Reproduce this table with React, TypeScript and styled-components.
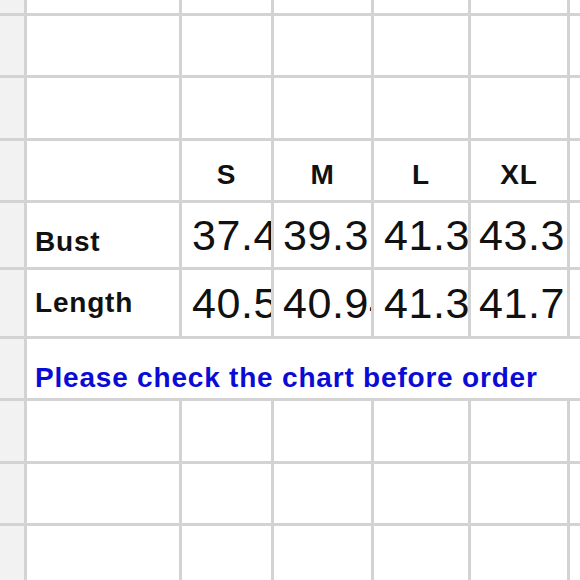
import { Fragment } from "react";
import styled, { createGlobalStyle } from "styled-components";

const GlobalStyle = createGlobalStyle`
	html, body {
		margin: 0;
		padding: 0;
		background: #ffffff;
	}
	body {
		font-family: "Liberation Sans", Arial, sans-serif;
	}
`;

// the sheet: grid lines are the 3px gaps showing the grey background
const Sheet = styled.div`
	display: grid;
	grid-template-columns: 24px 152px 89px 97px 94px 96px 1fr;
	grid-template-rows: 13px 59px 60px 59px 64px 66px 59px 60px 59px 1fr;
	gap: 3px;
	width: 580px;
	height: 580px;
	background: #d3d3d3;
	overflow: hidden;
`;

const Gutter = styled.div`
	background: #f2f2f2;
`;

const Cell = styled.div`
	background: #ffffff;
	overflow: hidden;
	white-space: nowrap;
`;

const HeaderCell = styled(Cell)`
	text-align: center;
	padding-top: 20px;
	font-size: 28px;
	line-height: 28px;
	font-weight: bold;
	letter-spacing: 0.8px;
	color: #111;
`;

const LabelCell = styled(Cell)<{ $top: number }>`
	padding: ${(p) => p.$top}px 0 0 8px;
	font-size: 28px;
	line-height: 28px;
	font-weight: bold;
	letter-spacing: 0.8px;
	color: #111;
`;

const NumberCell = styled(Cell)<{ $top: number; $left: number }>`
	padding: ${(p) => p.$top}px 0 0 ${(p) => p.$left}px;
	font-size: 43px;
	line-height: 42px;
	letter-spacing: 0.6px;
	color: #111;
`;

const NoteCell = styled(Cell)`
	grid-column: span 6;
	padding: 25px 0 0 8px;
	font-size: 28px;
	line-height: 28px;
	font-weight: bold;
	letter-spacing: 0.8px;
	color: #0b0bd6;
`;

const sizes = ["S", "M", "L", "XL"];
const colPad = [10, 9, 10, 8];

const rows = [
	{ label: "Bust", top: 25, numTop: 11, values: ["37.45", "39.3", "41.3", "43.3"] },
	{ label: "Length", top: 19, numTop: 12, values: ["40.55", "40.94", "41.3", "41.7"] },
];

const EmptyRow = () => (
	<>
		<Gutter />
		{[0, 1, 2, 3, 4, 5].map((i) => (
			<Cell key={i} />
		))}
	</>
);

const App = () => {
	return (
		<>
			<GlobalStyle />
			<Sheet>
				<EmptyRow />
				<EmptyRow />
				<EmptyRow />

				<Gutter />
				<Cell />
				{sizes.map((s) => (
					<HeaderCell key={s}>{s}</HeaderCell>
				))}
				<Cell />

				{rows.map((r) => (
					<Fragment key={r.label}>
						<Gutter />
						<LabelCell $top={r.top}>{r.label}</LabelCell>
						{r.values.map((v, i) => (
							<NumberCell key={i} $top={r.numTop} $left={colPad[i]}>
								{v}
							</NumberCell>
						))}
						<Cell />
					</Fragment>
				))}

				<Gutter />
				<NoteCell>Please check the chart before order</NoteCell>

				<EmptyRow />
				<EmptyRow />
				<EmptyRow />
			</Sheet>
		</>
	);
};

export default App;
